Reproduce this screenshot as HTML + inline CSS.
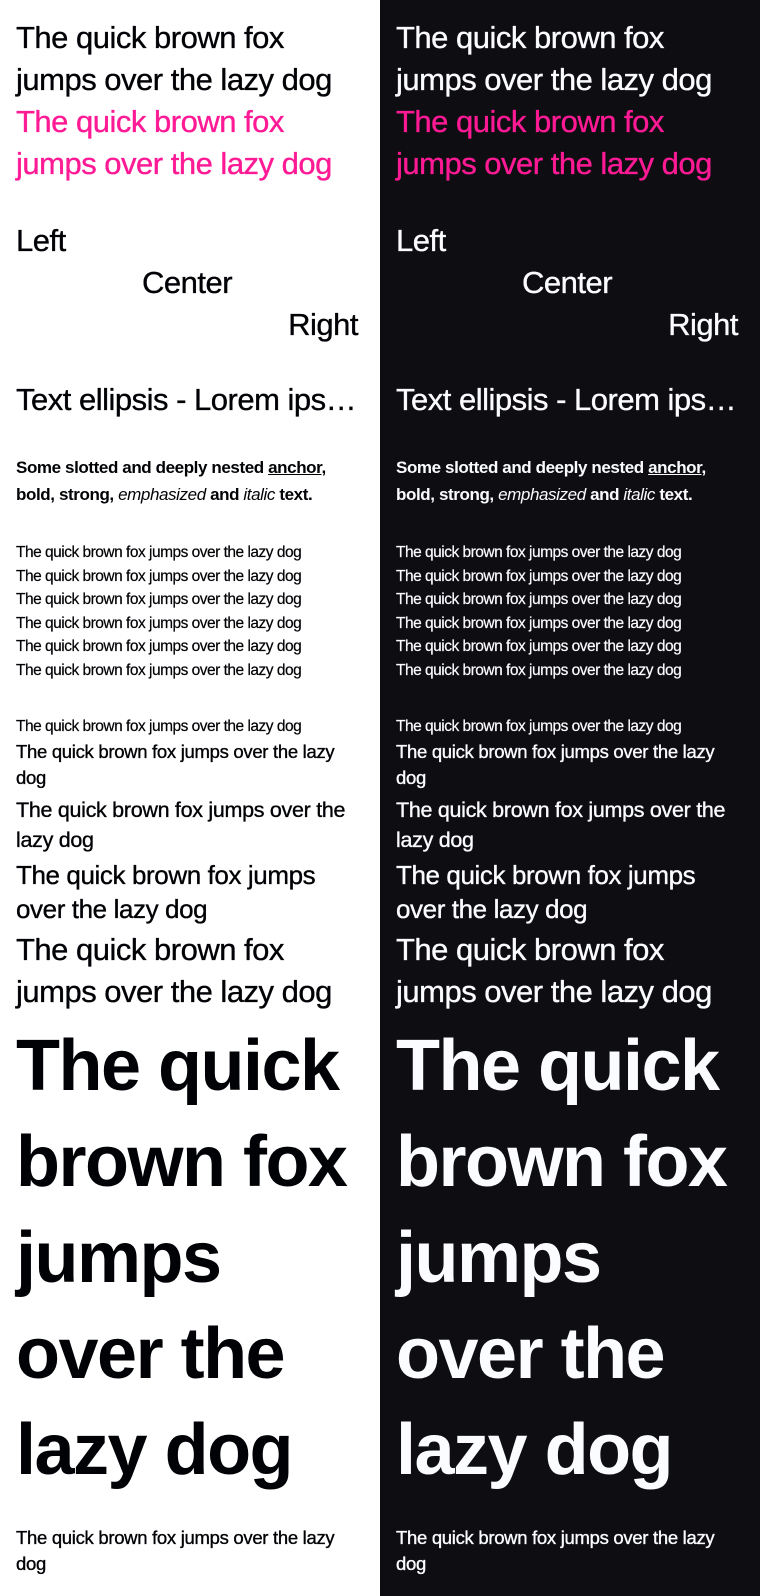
<!DOCTYPE html>
<html><head><meta charset="utf-8"><style>
*{margin:0;padding:0;box-sizing:border-box}
body{width:760px;height:1596px;display:flex;font-family:"Liberation Sans",sans-serif;overflow:hidden}
.col{width:380px;height:1596px;padding:17px 22px 0 16px}
.l{background:#fff;color:#010205;-webkit-text-stroke:0.35px #010205}
.d{background:#0e0e12;color:#fbfcff;-webkit-text-stroke:0.35px #fbfcff}
.h{font-size:31px;line-height:42px;letter-spacing:-0.5px}
.l .pink,.d .pink{color:#ff1a95;-webkit-text-stroke:0.35px #ff1a95}
.ell{white-space:nowrap;overflow:hidden;text-overflow:ellipsis}
.s{font-size:17px;line-height:27px;font-weight:bold;letter-spacing:-0.4px;-webkit-text-stroke:0 !important}
.s a{color:inherit}
.x{font-size:15.5px;line-height:23.5px;letter-spacing:-0.5px;-webkit-text-stroke:0.2px !important}
.m1{font-size:18.5px;line-height:26px;letter-spacing:-0.3px}
.m2{font-size:21.5px;line-height:30px;letter-spacing:-0.3px;margin-top:4px}
.m3{font-size:26px;line-height:34px;letter-spacing:-0.4px;margin-top:3px}
.hh{margin-top:3px}
.g{font-size:72px;line-height:96px;letter-spacing:-1.5px;font-weight:bold;-webkit-text-stroke:0 !important;margin-top:5px}
.b{font-size:18.5px;line-height:26px;letter-spacing:-0.3px}
</style></head><body>
<div class="col l">
<p class="h">The quick brown fox jumps over the lazy dog</p>
<p class="h pink">The quick brown fox jumps over the lazy dog</p>
<div style="height:35px"></div>
<p class="h">Left</p>
<p class="h" style="text-align:center">Center</p>
<p class="h" style="text-align:right">Right</p>
<div style="height:33px"></div>
<p class="h ell">Text ellipsis - Lorem ipsum dolor sit amet</p>
<div style="height:33px"></div>
<p class="s">Some slotted and deeply nested <a href="#">anchor</a>, <b>bold</b>, <strong>strong</strong>, <em style="font-weight:normal">emphasized</em> and <i style="font-weight:normal">italic</i> text.</p>
<div style="height:33px"></div>
<p class="x">The quick brown fox jumps over the lazy dog</p>
<p class="x">The quick brown fox jumps over the lazy dog</p>
<p class="x">The quick brown fox jumps over the lazy dog</p>
<p class="x">The quick brown fox jumps over the lazy dog</p>
<p class="x">The quick brown fox jumps over the lazy dog</p>
<p class="x">The quick brown fox jumps over the lazy dog</p>
<div style="height:33px"></div>
<p class="x">The quick brown fox jumps over the lazy dog</p>
<p class="m1">The quick brown fox jumps over the lazy dog</p>
<p class="m2">The quick brown fox jumps over the lazy dog</p>
<p class="m3">The quick brown fox jumps over the lazy dog</p>
<p class="h hh">The quick brown fox jumps over the lazy dog</p>
<p class="g">The quick brown fox jumps over the lazy dog</p>
<div style="height:27px"></div>
<p class="b">The quick brown fox jumps over the lazy dog</p>
</div>
<div class="col d">
<p class="h">The quick brown fox jumps over the lazy dog</p>
<p class="h pink">The quick brown fox jumps over the lazy dog</p>
<div style="height:35px"></div>
<p class="h">Left</p>
<p class="h" style="text-align:center">Center</p>
<p class="h" style="text-align:right">Right</p>
<div style="height:33px"></div>
<p class="h ell">Text ellipsis - Lorem ipsum dolor sit amet</p>
<div style="height:33px"></div>
<p class="s">Some slotted and deeply nested <a href="#">anchor</a>, <b>bold</b>, <strong>strong</strong>, <em style="font-weight:normal">emphasized</em> and <i style="font-weight:normal">italic</i> text.</p>
<div style="height:33px"></div>
<p class="x">The quick brown fox jumps over the lazy dog</p>
<p class="x">The quick brown fox jumps over the lazy dog</p>
<p class="x">The quick brown fox jumps over the lazy dog</p>
<p class="x">The quick brown fox jumps over the lazy dog</p>
<p class="x">The quick brown fox jumps over the lazy dog</p>
<p class="x">The quick brown fox jumps over the lazy dog</p>
<div style="height:33px"></div>
<p class="x">The quick brown fox jumps over the lazy dog</p>
<p class="m1">The quick brown fox jumps over the lazy dog</p>
<p class="m2">The quick brown fox jumps over the lazy dog</p>
<p class="m3">The quick brown fox jumps over the lazy dog</p>
<p class="h hh">The quick brown fox jumps over the lazy dog</p>
<p class="g">The quick brown fox jumps over the lazy dog</p>
<div style="height:27px"></div>
<p class="b">The quick brown fox jumps over the lazy dog</p>
</div>
</body></html>
